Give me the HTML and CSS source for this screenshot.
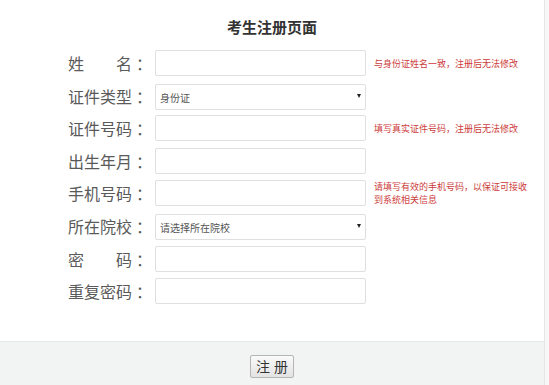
FILE: index.html
```html
<!DOCTYPE html>
<html lang="zh-CN">
<head>
    <meta charset="UTF-8">
    <meta name="viewport" content="width=device-width, initial-scale=1.0">
    <title>考生注册页面</title>
    <link rel="stylesheet" href="styles.css">
</head>
<body>
    <div class="page">
        <div class="main">
            <h1 class="title">考生注册页面</h1>
            <form class="reg-form">
                <div class="row">
                    <label class="label"><span class="label-text">姓名</span><span class="colon">：</span></label>
                    <input type="text" class="field">
                    <span class="hint">与身份证姓名一致，注册后无法修改</span>
                </div>
                <div class="row">
                    <label class="label"><span class="label-text">证件类型</span><span class="colon">：</span></label>
                    <div class="select-wrap">
                        <select class="field select">
                            <option>身份证</option>
                        </select>
                    </div>
                </div>
                <div class="row">
                    <label class="label"><span class="label-text">证件号码</span><span class="colon">：</span></label>
                    <input type="text" class="field">
                    <span class="hint">填写真实证件号码，注册后无法修改</span>
                </div>
                <div class="row">
                    <label class="label"><span class="label-text">出生年月</span><span class="colon">：</span></label>
                    <input type="text" class="field">
                </div>
                <div class="row">
                    <label class="label"><span class="label-text">手机号码</span><span class="colon">：</span></label>
                    <input type="text" class="field">
                    <span class="hint">请填写有效的手机号码，以保证可接收到系统相关信息</span>
                </div>
                <div class="row">
                    <label class="label"><span class="label-text">所在院校</span><span class="colon">：</span></label>
                    <div class="select-wrap">
                        <select class="field select">
                            <option>请选择所在院校</option>
                        </select>
                    </div>
                </div>
                <div class="row">
                    <label class="label"><span class="label-text">密码</span><span class="colon">：</span></label>
                    <input type="password" class="field">
                </div>
                <div class="row">
                    <label class="label"><span class="label-text">重复密码</span><span class="colon">：</span></label>
                    <input type="password" class="field">
                </div>
            </form>
        </div>
        <div class="footer">
            <button type="button" class="submit-btn">注册</button>
        </div>
    </div>
</body>
</html>
```

FILE: styles.css
```css
body {
    margin: 0;
    padding: 0;
    font-family: "Noto Sans CJK SC", "Liberation Sans", sans-serif;
    background: #f7f7f7;
    color: #555;
}
.page {
    width: 544px;
    height: 385px;
    background: #fff;
    border-right: 1px solid #e3e6e6;
    display: flex;
    flex-direction: column;
}
.main {
    height: 341px;
    box-sizing: border-box;
    padding-top: 16px;
}
.title {
    margin: 0 0 12px;
    text-align: center;
    font-size: 15px;
    line-height: 22px;
    font-weight: bold;
    color: #333;
}
.reg-form {
    padding-left: 68px;
    display: flex;
    flex-direction: column;
    gap: 6.6px;
}
.row {
    display: flex;
    align-items: center;
    height: 26px;
}
.label {
    width: 87px;
    flex-shrink: 0;
    font-size: 16px;
    line-height: 26px;
    color: #5a5a5a;
    white-space: nowrap;
}
.label-text {
    display: inline-block;
    width: 64px;
    text-align: justify;
    text-align-last: justify;
}
.colon {
    margin-left: 4px;
}
.field {
    width: 211px;
    height: 26px;
    box-sizing: border-box;
    margin: 0;
    padding: 0 4px;
    border: 1px solid #dfdfdf;
    border-radius: 2px;
    background: #fff;
    font-family: inherit;
    font-size: 10px;
    color: #555;
    outline: none;
}
.select-wrap {
    position: relative;
    width: 211px;
    height: 26px;
}
.select {
    appearance: none;
    -webkit-appearance: none;
}
.select-wrap::after {
    content: "";
    position: absolute;
    right: 5px;
    top: 11px;
    border-left: 2px solid transparent;
    border-right: 2px solid transparent;
    border-top: 4px solid #222;
    pointer-events: none;
}
.hint {
    width: 155px;
    margin-left: 8px;
    font-size: 9px;
    line-height: 13px;
    color: #cc3b3b;
}
.footer {
    flex: 1;
    background: #f2f3f3;
    border-top: 1px solid #e6e8e8;
    display: flex;
    justify-content: center;
    padding-top: 13px;
    box-sizing: border-box;
}
.submit-btn {
    width: 44px;
    height: 23px;
    padding: 0 0 0 4px;
    border: 1px solid #b5b5b5;
    border-radius: 2px;
    background: linear-gradient(#fafafa, #e3e3e3);
    font-family: inherit;
    font-size: 14px;
    line-height: 21px;
    letter-spacing: 4px;
    color: #333;
}
```
